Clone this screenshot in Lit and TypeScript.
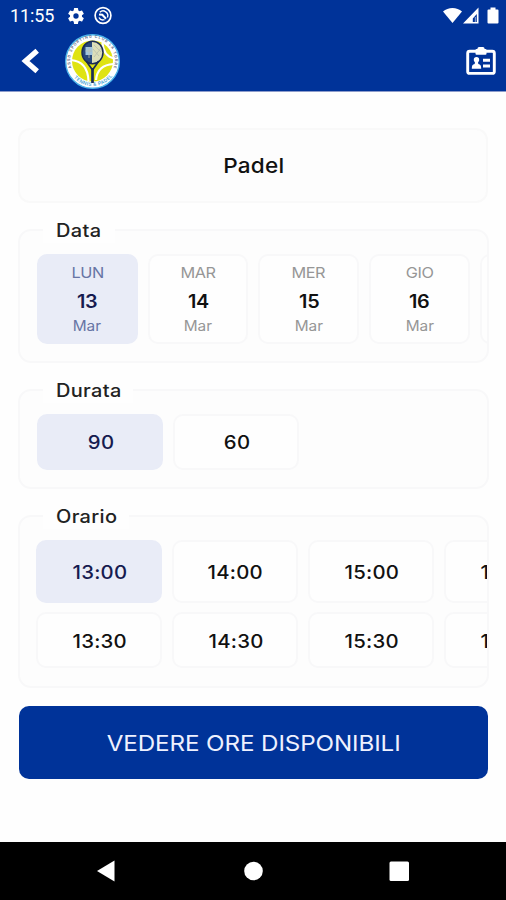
import { LitElement, html, css, svg } from "lit";
import { customElement, property, state } from "lit/decorators.js";
import { classMap } from "lit/directives/class-map.js";

/** Bordered group whose title interrupts the top edge. */
@customElement("field-group")
class FieldGroup extends LitElement {
  @property() label = "";

  static styles = css`
    :host {
      display: block;
      position: relative;
      box-sizing: border-box;
      border: 2px solid #f8f8f9;
      border-radius: 13px;
      background: #fdfdfd;
    }
    .label {
      position: absolute;
      top: -14px;
      left: 23px;
      padding: 0 18px 0 13px;
      height: 26px;
      line-height: 27px;
      font-size: 18px;
      font-weight: 500;
      letter-spacing: 0.3px;
      color: #222;
      background: #fefefe;
    }
    .wide {
      display: inline-block;
      transform: scaleX(1.11);
      transform-origin: left center;
    }
    .scroller {
      overflow: hidden;
      height: 100%;
      border-radius: 0 10px 10px 0;
    }
  `;

  render() {
    return html`<div class="scroller"><slot></slot></div>
      <div class="label"><span class="wide">${this.label}</span></div>`;
  }
}

@customElement("app-root")
class AppRoot extends LitElement {
  @state() day = 0;
  @state() duration = "90";
  @state() time = "13:00";

  private days = [
    ["LUN", "13"],
    ["MAR", "14"],
    ["MER", "15"],
    ["GIO", "16"],
  ];
  private slots = [
    ["13:00", "14:00", "15:00", "16:00"],
    ["13:30", "14:30", "15:30", "16:30"],
  ];

  static styles = css`
    :host {
      display: flex;
      flex-direction: column;
      width: 506px;
      height: 900px;
      overflow: hidden;
      background: #fefefe;
      font-family: Inter, "Open Sans", sans-serif;
      color: #111;
    }
    svg {
      display: block;
      flex: none;
    }
    .top {
      height: 91px;
      background: #003399;
      border-bottom: 1px solid #8d9ccb;
      box-sizing: content-box;
    }
    .status {
      height: 31px;
      display: flex;
      align-items: center;
      color: #fff;
    }
    .clock {
      width: 57px;
      padding-left: 10px;
      font: 400 18px/31px Roboto, sans-serif;
      letter-spacing: -0.1px;
    }
    .gap {
      flex: 1;
    }
    .bar {
      height: 60px;
      display: flex;
      align-items: center;
      padding-left: 20px;
      padding-right: 9px;
    }
    .logo {
      margin-left: 24px;
    }
    .content {
      flex: 1;
      padding: 36px 18px 0 18px;
      display: flex;
      flex-direction: column;
    }
    .wide {
      display: inline-block;
      transform: scaleX(1.1);
    }
    .sport {
      height: 75px;
      box-sizing: border-box;
      border: 2px solid #f9f9f9;
      border-radius: 12px;
      background: #fdfdfd;
      display: flex;
      align-items: center;
      justify-content: center;
      font-size: 20.5px;
      font-weight: 500;
      letter-spacing: 0.2px;
      padding-left: 1px;
    }
    field-group {
      margin: 26px -1px 0 0;
    }
    .date {
      height: 134px;
    }
    .durata {
      height: 100px;
    }
    .orario {
      height: 173px;
    }
    .row {
      display: flex;
      gap: 10px;
      padding-left: 17px;
    }
    .date .row,
    .durata .row {
      padding-top: 23px;
    }
    .orario .row {
      padding-left: 16px;
      padding-top: 23px;
    }
    .orario .row + .row {
      padding-top: 9px;
    }
    .cell {
      flex: none;
      box-sizing: border-box;
      border: 2px solid #f8f8f9;
      border-radius: 10px;
      background: #fefefe;
      display: flex;
      align-items: center;
      justify-content: center;
      font-size: 18.5px;
      font-weight: 500;
      letter-spacing: 0.2px;
      width: 126px;
      height: 56px;
    }
    .cell span {
      padding-left: 1px;
    }
    .orario .row + .row .cell {
      padding-top: 1px;
    }
    .tall {
      height: 63px;
    }
    .day {
      flex-direction: column;
      width: 100.7px;
      height: 90px;
      padding-top: 2px;
      color: #969696;
      font-weight: 400;
    }
    .name {
      font-size: 14.8px;
      line-height: 25px;
      letter-spacing: -0.4px;
    }
    .num {
      font-size: 18px;
      line-height: 32px;
      font-weight: 600;
      letter-spacing: -0.3px;
      color: #111;
    }
    .month {
      font-size: 14px;
      line-height: 15px;
      letter-spacing: 0;
      padding-bottom: 6px;
    }
    .on {
      background: #e9ecf7;
      border-color: #e9ecf7;
      color: #161b50;
    }
    .day.on {
      color: #6775a5;
    }
    .on .num {
      color: #161b50;
    }
    .cta {
      margin: 18px 0 0 1px;
      height: 73px;
      border: 0;
      border-radius: 10px;
      background: #003399;
      color: #eef1ff;
      font: 400 22px/74px Inter, sans-serif;
      letter-spacing: -0.1px;
      text-align: center;
      padding: 0;
      white-space: nowrap;
    }
    .nav {
      height: 58px;
      background: #000;
      display: flex;
    }
  `;

  private logo() {
    return svg`
      <circle cx="27.5" cy="27.5" r="26.800" fill="#fff" stroke="#4db4ea" stroke-width="1.400"/>
      <circle cx="27.5" cy="27" r="20.500" fill="#dfe312"/>
      <path d="M6 26C17 27 23 34 23.500 47M31 46C32 35 39 30.500 48.500 30M37.500 9C38 18 43 23 49 24.500" fill="none" stroke="#fff" stroke-width="2.200"/>
      <defs>
        <path id="arcTop" d="M6.500 34A22.400 22.400 0 1 1 48.500 34"/>
        <path id="arcLow" d="M3 32A25 25 0 0 0 52 32"/>
      </defs>
      <text font-family="Inter, sans-serif" font-size="3.800" font-weight="600" fill="#59607c"><textPath href="#arcTop" textLength="86">ASSD SPORTING CLUB LA TORRE</textPath></text>
      <text font-family="Inter, sans-serif" font-size="4.800" font-weight="600" fill="#49a5d4"><textPath href="#arcLow" startOffset="13" textLength="44">TENNIS &amp; PADEL</textPath></text>
      <ellipse cx="27.500" cy="18.500" rx="10.300" ry="11" fill="#dcdfb8"/>
      <path d="M27 7.500C20 7.500 17 12 17.200 18.500C17.500 25 22 29.500 27 29.500Z" fill="#27477a"/>
      <path d="M20.500 13H27.500V21H20.500Z" fill="#9fc4dd"/>
      <path d="M29 11L36 18M28 15L34 22M29 23L36 14M20.500 17H27M24 13V24" fill="none" stroke="#b9bfae" stroke-width=".8"/>
      <ellipse cx="27.500" cy="18.500" rx="10.500" ry="11.200" fill="none" stroke="#1b2c55" stroke-width="1.500"/>
      <path d="M21.500 27.500L27.500 36L33.500 27.500" fill="none" stroke="#1b2c55" stroke-width="1.700"/>
      <path d="M27.500 34V49" stroke="#1b2c55" stroke-width="2.700"/>`;
  }

  render() {
    return html`
      <div class="top">
        <div class="status">
          <div class="clock">11:55</div>
          <svg width="18" height="18" viewBox="1.200 1.200 21.600 21.600" fill="#fff">
            <path fill-rule="evenodd" d="M19.140 12.940c.04-.3.060-.610.060-.940s-.02-.64-.07-.94l2.030-1.580a.49.490 0 0 0 .12-.61l-1.920-3.320a.49.490 0 0 0-.59-.22l-2.390.96a7 7 0 0 0-1.620-.94l-.36-2.540a.48.480 0 0 0-.48-.41h-3.840a.48.480 0 0 0-.47.410l-.36 2.540c-.59.240-1.130.570-1.620.940l-2.390-.96a.48.480 0 0 0-.59.220L2.740 8.870a.48.480 0 0 0 .12.610l2.030 1.580c-.05.300-.09.630-.09.940s.02.640.070.940l-2.030 1.580a.49.490 0 0 0-.12.610l1.920 3.320c.12.220.370.290.590.220l2.390-.96c.5.380 1.030.700 1.620.940l.36 2.540c.05.240.240.410.480.410h3.840c.24 0 .44-.17.470-.41l.36-2.540a7 7 0 0 0 1.620-.94l2.390.96c.22.080.470 0 .59-.22l1.920-3.320a.48.480 0 0 0-.12-.61zM12 15.200a3.200 3.200 0 1 1 0-6.400 3.200 3.200 0 0 1 0 6.400z"/>
          </svg>
          <svg width="28" height="20" viewBox="0 0 28 20" fill="none" stroke="#fff">
            <circle cx="18" cy="9.500" r="7.900" stroke-width="1.700"/>
            <path d="M14 11.500A4.500 4.500 0 0 0 19.500 13.700M14.800 6.300A4.700 4.700 0 0 1 22.400 11.500" stroke-width="1.400"/>
            <path d="M14 8.500L17.300 8.800L21 12.800" stroke-width="2"/>
          </svg>
          <div class="gap"></div>
          <svg width="64" height="20" viewBox="0 0 64 20" fill="#fff">
            <path d="M1 5.500C6 .7 15 .7 20 5.500L10.500 17Z"/>
            <path fill-rule="evenodd" d="M36.500 1.500V17.500H21ZM34.800 8L30.800 12.500V15.900H34.800Z"/>
            <path d="M32.800 11H34V15.900H32.800Z" opacity=".5"/>
            <path d="M48.500 1.500H53.500V3.500H55.500Q56.500 3.500 56.500 4.500V16.500Q56.500 17.500 55.500 17.500H46.500Q45.500 17.500 45.500 16.500V4.500Q45.500 3.500 46.500 3.500H48.500Z"/>
          </svg>
        </div>
        <div class="bar">
          <svg width="21" height="28" viewBox="0 0 21 28">
            <path d="M17.200 3.800L5.500 14L17.200 24.200" fill="none" stroke="#fff" stroke-width="5.300"/>
          </svg>
          <svg class="logo" width="55" height="55" viewBox="0 0 55 55">${this.logo()}</svg>
          <div class="gap"></div>
          <svg width="32" height="30" viewBox="0 0 32 30" fill="#fff">
            <rect x="2.700" y="5.200" width="26.600" height="22.200" rx="2" fill="none" stroke="#fff" stroke-width="2.900"/>
            <rect x="12.500" y="1" width="7" height="4" rx="1.500"/>
            <rect x="10.500" y="3" width="11" height="5.800" rx="1"/>
            <circle cx="11.500" cy="13.800" r="2.700"/>
            <path d="M10 15.500H13L13.300 18C15.500 18.500 16.200 19.500 16.200 22.800H6.800C6.800 19.500 7.500 18.500 9.700 18Z"/>
            <path d="M18 12.800H25V15.800H18ZM18 18.600H25V21.600H18Z"/>
          </svg>
        </div>
      </div>

      <div class="content">
        <div class="sport"><span class="wide">Padel</span></div>

        <field-group class="date" label="Data">
          <div class="row">
            ${this.days.map(
              ([name, num], i) => html`<div
                class=${classMap({ cell: true, day: true, on: i === this.day })}
                @click=${() => (this.day = i)}
              >
                <div class="name wide">${name}</div>
                <div class="num wide">${num}</div>
                <div class="month wide">Mar</div>
              </div>`
            )}
            <div class="cell day"></div>
          </div>
        </field-group>

        <field-group class="durata" label="Durata">
          <div class="row">
            ${["90", "60"].map(
              (d) => html`<div
                class=${classMap({ cell: true, on: d === this.duration })}
                @click=${() => (this.duration = d)}
              ><span class="wide">${d}</span></div>`
            )}
          </div>
        </field-group>

        <field-group class="orario" label="Orario">
          ${this.slots.map(
            (row, r) => html`<div class="row">
              ${row.map(
                (t) => html`<div
                  class=${classMap({ cell: true, tall: r === 0, on: t === this.time })}
                  @click=${() => (this.time = t)}
                ><span class="wide">${t}</span></div>`
              )}
            </div>`
          )}
        </field-group>

        <button class="cta"><span class="wide">VEDERE ORE DISPONIBILI</span></button>
      </div>

      <div class="nav">
        <svg width="506" height="58" viewBox="0 0 506 58" fill="#fff">
          <path d="M97 29L114.500 18.500V39.500Z"/>
          <circle cx="253.500" cy="29" r="9.300"/>
          <rect x="389.500" y="19.500" width="19.500" height="19.500" rx="1.500"/>
        </svg>
      </div>
    `;
  }
}
